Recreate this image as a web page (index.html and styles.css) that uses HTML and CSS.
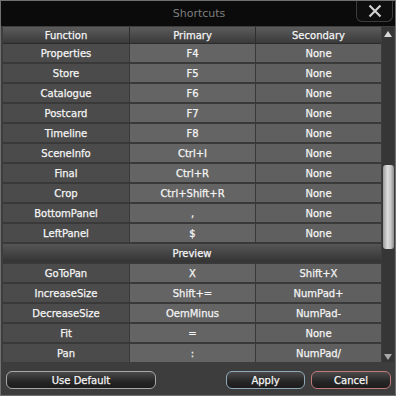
FILE: index.html
```html
<!DOCTYPE html>
<html>
<head>
<meta charset="utf-8">
<link rel="stylesheet" href="styles.css">
</head>
<body>
<div class="window">
  <div class="titlebar">
    <span class="title">Shortcuts</span>
    <div class="close">
      <svg width="14" height="14" viewBox="0 0 14 14"><path d="M1.5 1.5 L12.5 12.5 M12.5 1.5 L1.5 12.5" stroke="#d0d0d0" stroke-width="2.2" fill="none"/></svg>
    </div>
  </div>
  <div class="content">
    <div class="table">
      <div class="row head"><div class="cell">Function</div><div class="cell">Primary</div><div class="cell">Secondary</div></div>
      <div class="rows">
        <div class="row"><div class="cell fn">Properties</div><div class="cell pr">F4</div><div class="cell se">None</div></div>
        <div class="row"><div class="cell fn">Store</div><div class="cell pr">F5</div><div class="cell se">None</div></div>
        <div class="row"><div class="cell fn">Catalogue</div><div class="cell pr">F6</div><div class="cell se">None</div></div>
        <div class="row"><div class="cell fn">Postcard</div><div class="cell pr">F7</div><div class="cell se">None</div></div>
        <div class="row"><div class="cell fn">Timeline</div><div class="cell pr">F8</div><div class="cell se">None</div></div>
        <div class="row"><div class="cell fn">SceneInfo</div><div class="cell pr">Ctrl+I</div><div class="cell se">None</div></div>
        <div class="row"><div class="cell fn">Final</div><div class="cell pr">Ctrl+R</div><div class="cell se">None</div></div>
        <div class="row"><div class="cell fn">Crop</div><div class="cell pr">Ctrl+Shift+R</div><div class="cell se">None</div></div>
        <div class="row"><div class="cell fn">BottomPanel</div><div class="cell pr">,</div><div class="cell se">None</div></div>
        <div class="row"><div class="cell fn">LeftPanel</div><div class="cell pr">$</div><div class="cell se">None</div></div>
        <div class="row group"><div class="cell">Preview</div></div>
        <div class="row"><div class="cell fn">GoToPan</div><div class="cell pr">X</div><div class="cell se">Shift+X</div></div>
        <div class="row"><div class="cell fn">IncreaseSize</div><div class="cell pr">Shift+=</div><div class="cell se">NumPad+</div></div>
        <div class="row"><div class="cell fn">DecreaseSize</div><div class="cell pr">OemMinus</div><div class="cell se">NumPad-</div></div>
        <div class="row"><div class="cell fn">Fit</div><div class="cell pr">=</div><div class="cell se">None</div></div>
        <div class="row"><div class="cell fn">Pan</div><div class="cell pr">:</div><div class="cell se">NumPad/</div></div>
      </div>
    </div>
    <div class="scrollbar">
      <div class="arrow up"></div>
      <div class="track"><div class="thumb"></div></div>
      <div class="arrow down"></div>
    </div>
  </div>
  <div class="footer">
    <button class="btn default">Use Default</button>
    <div class="spacer"></div>
    <button class="btn apply">Apply</button>
    <button class="btn cancel">Cancel</button>
  </div>
</div>
</body>
</html>
```

FILE: styles.css
```css
* { box-sizing: border-box; }
html, body { margin: 0; padding: 0; background: #3d3d3d; }
body {
  font-family: "DejaVu Sans", Verdana, sans-serif;
  font-size: 10px;
  color: #f2f2f2;
}
.window {
  width: 396px;
  height: 396px;
  border: 1px solid #707070;
  background: #3d3d3d;
  display: flex;
  flex-direction: column;
  overflow: hidden;
}
.titlebar {
  height: 25px;
  background: #0b0b0b;
  display: flex;
  justify-content: center;
  align-items: center;
  position: relative;
  flex: none;
}
.title {
  color: #7e7e7e;
  font-size: 11px;
  padding-left: 2px;
}
.close {
  position: absolute;
  right: 2px;
  top: -1px;
  width: 37px;
  height: 22px;
  border: 1px solid #3c3c3c;
  border-top: none;
  border-radius: 0 0 6px 6px;
  background: #0e0e0e;
  display: flex;
  justify-content: center;
  align-items: center;
}
.content {
  display: flex;
  padding: 1px 1px 0 2px;
  height: 336px;
  flex: none;
}
.table {
  width: 378px;
  overflow: hidden;
  background: #393939;
}
.row {
  display: grid;
  grid-template-columns: 126px 125px 125px;
  column-gap: 1px;
  height: 18px;
  margin-bottom: 2px;
}
.row.head {
  height: 17px;
  margin-bottom: 0;
  background: #2e2e2e;
  border-bottom: 1px solid #2a2a2a;
}
.head .cell {
  background: linear-gradient(#5c5c5c, #3a3a3a);
}
.cell {
  display: flex;
  align-items: center;
  justify-content: center;
  white-space: nowrap;
  color: #f4f4f4;
  -webkit-text-stroke: 0.25px #f4f4f4;
}
.fn { background: #4b4b4b; }
.pr { background: #646464; }
.se { background: #5f5f5f; }
.row.group {
  grid-template-columns: 1fr;
}
.group .cell {
  background: linear-gradient(#565656, #343434);
}
.scrollbar {
  width: 12px;
  margin-left: 1px;
  background: #363636;
  display: flex;
  flex-direction: column;
  align-items: center;
}
.arrow {
  width: 0; height: 0;
  border-left: 4px solid transparent;
  border-right: 4px solid transparent;
  flex: none;
}
.arrow.up { border-bottom: 6px solid #d8d8d8; margin-top: 4px; }
.arrow.down { border-top: 6px solid #a8a8a8; margin-bottom: 2px; }
.track {
  flex: 1;
  width: 12px;
  padding-top: 128px;
}
.thumb {
  width: 11px;
  height: 84px;
  margin-left: 1px;
  border-radius: 3px;
  background: linear-gradient(90deg, #9a9a9a, #dcdcdc 40%, #c8c8c8 70%, #8c8c8c);
}
.footer {
  display: flex;
  align-items: flex-start;
  padding: 9px 4px 0 5px;
  gap: 6px;
}
.spacer { flex: 1; }
.btn {
  height: 18px;
  border-radius: 6px;
  background: linear-gradient(#4a4a4a, #262626 60%, #1c1c1c);
  color: #f6f6f6;
  font-family: "DejaVu Sans", Verdana, sans-serif;
  font-size: 10px;
  -webkit-text-stroke: 0.25px #f6f6f6;
  padding: 0;
}
.default { width: 150px; border: 1px solid #a8a8a8; }
.apply { width: 79px; border: 1px solid #8fa9b8; }
.cancel { width: 80px; border: 1px solid #c27878; }
```
